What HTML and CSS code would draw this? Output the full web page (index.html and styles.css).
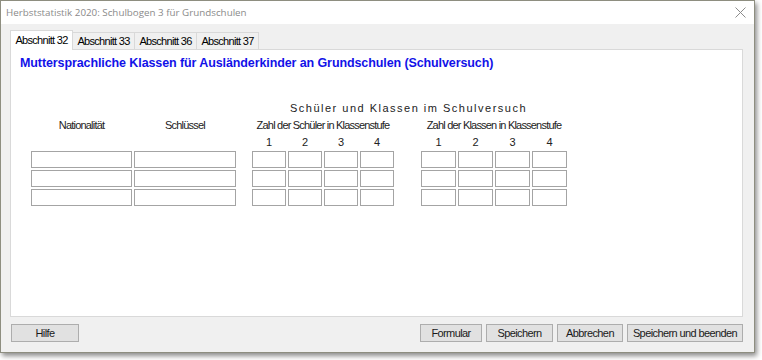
FILE: index.html
```html
<!DOCTYPE html>
<html lang="de">
<head>
  <meta charset="utf-8">
  <title>Herbststatistik 2020</title>
  <link rel="stylesheet" href="styles.css">
</head>
<body>
  <div class="window">
    <div class="titleBar">
      <span class="titleText">Herbststatistik 2020: Schulbogen 3 für Grundschulen</span>
      <svg class="closeIcon" width="11" height="11" viewBox="0 0 11 11">
        <path d="M0.5 0.5 L10.5 10.5 M10.5 0.5 L0.5 10.5" stroke="#8c8c8c" stroke-width="1" fill="none"/>
      </svg>
    </div>

    <div class="windowBody">
      <div class="tabStrip">
        <div class="tab active">Abschnitt 32</div>
        <div class="tab">Abschnitt 33</div>
        <div class="tab">Abschnitt 36</div>
        <div class="tab">Abschnitt 37</div>
      </div>

      <div class="tabPanel">
        <h1 class="sectionTitle">Muttersprachliche Klassen für Ausländerkinder an Grundschulen (Schulversuch)</h1>

        <div class="formGrid">
          <div class="groupTitle">Schüler und Klassen im Schulversuch</div>

          <div class="colLabel nat">Nationalität</div>
          <div class="colLabel key">Schlüssel</div>
          <div class="colLabel pupils">Zahl der Schüler in Klassenstufe</div>
          <div class="colLabel classes">Zahl der Klassen in Klassenstufe</div>

          <div class="stufe s1">1</div>
          <div class="stufe s2">2</div>
          <div class="stufe s3">3</div>
          <div class="stufe s4">4</div>
          <div class="stufe k1">1</div>
          <div class="stufe k2">2</div>
          <div class="stufe k3">3</div>
          <div class="stufe k4">4</div>

          <input class="field row1 nat" type="text">
          <input class="field row1 key" type="text">
          <input class="field row1 s1" type="text">
          <input class="field row1 s2" type="text">
          <input class="field row1 s3" type="text">
          <input class="field row1 s4" type="text">
          <input class="field row1 k1" type="text">
          <input class="field row1 k2" type="text">
          <input class="field row1 k3" type="text">
          <input class="field row1 k4" type="text">

          <input class="field row2 nat" type="text">
          <input class="field row2 key" type="text">
          <input class="field row2 s1" type="text">
          <input class="field row2 s2" type="text">
          <input class="field row2 s3" type="text">
          <input class="field row2 s4" type="text">
          <input class="field row2 k1" type="text">
          <input class="field row2 k2" type="text">
          <input class="field row2 k3" type="text">
          <input class="field row2 k4" type="text">

          <input class="field row3 nat" type="text">
          <input class="field row3 key" type="text">
          <input class="field row3 s1" type="text">
          <input class="field row3 s2" type="text">
          <input class="field row3 s3" type="text">
          <input class="field row3 s4" type="text">
          <input class="field row3 k1" type="text">
          <input class="field row3 k2" type="text">
          <input class="field row3 k3" type="text">
          <input class="field row3 k4" type="text">
        </div>
      </div>

      <div class="buttonBar">
        <button class="winButton help">Hilfe</button>
        <div class="buttonGroup">
          <button class="winButton formular">Formular</button>
          <button class="winButton save">Speichern</button>
          <button class="winButton cancel">Abbrechen</button>
          <button class="winButton saveClose">Speichern und beenden</button>
        </div>
      </div>
    </div>
  </div>
</body>
</html>
```

FILE: styles.css
```css
* {
  margin: 0;
  padding: 0;
  box-sizing: border-box;
}

html,
body {
  width: 100%;
  height: 100%;
  background: #ffffff;
  font-family: "Liberation Sans", Arial, sans-serif;
  font-size: 11px;
  color: #000;
}

.window {
  width: 755px;
  height: 353px;
  border: 1px solid #8e8e80;
  background: #f0f0f0;
  box-shadow: 2px 3px 5px rgba(0, 0, 0, 0.45);
  display: flex;
  flex-direction: column;
}

.titleBar {
  height: 23px;
  background: #ffffff;
  display: flex;
  align-items: center;
  justify-content: space-between;
  padding: 0 8px 0 5px;
}

.titleText {
  font-family: "Open Sans", "Noto Sans", sans-serif;
  font-size: 9.8px;
  color: #8a8a8a;
}

.closeIcon {
  display: block;
}

.windowBody {
  flex: 1;
  display: flex;
  flex-direction: column;
  padding: 5px 11px 0 9px;
}

.tabStrip {
  display: flex;
  align-items: flex-end;
  height: 20px;
}

.tab {
  height: 17px;
  border: 1px solid #d9d9d9;
  border-bottom: none;
  border-left: none;
  background: #f0f0f0;
  letter-spacing: -0.7px;
  line-height: 16px;
  width: 62px;
  text-align: center;
  white-space: nowrap;
}

.tab.active {
  height: 20px;
  background: #ffffff;
  border-left: 1px solid #d9d9d9;
  width: 63px;
  line-height: 18px;
  position: relative;
  top: 1px;
}

.tabPanel {
  height: 268px;
  background: #ffffff;
  border: 1px solid #d9d9d9;
  padding: 5px 0 0 9px;
}

.sectionTitle {
  font-size: 12.5px;
  font-weight: bold;
  color: #1212e8;
  line-height: 16px;
  letter-spacing: -0.1px;
}

.formGrid {
  display: grid;
  margin: 30px 0 0 11px;
  grid-template-columns: 101px 102px 12px repeat(4, 34px) 23px repeat(4, 35px);
  grid-template-rows: 15px 15px 14px 17px 17px 17px;
  column-gap: 2px;
  row-gap: 2px;
}

.groupTitle {
  grid-column: 4 / 13;
  grid-row: 1;
  text-align: center;
  letter-spacing: 1.5px;
  color: #222;
  line-height: 15px;
  padding-right: 2px;
}

.colLabel {
  grid-row: 2;
  text-align: center;
  letter-spacing: -0.8px;
  line-height: 15px;
  white-space: nowrap;
  color: #222;
}

.colLabel.pupils {
  grid-column: 4 / 8;
}

.colLabel.classes {
  grid-column: 9 / 13;
}

.stufe {
  grid-row: 3;
  text-align: center;
  line-height: 14px;
  color: #222;
}

.nat { grid-column: 1; }
.key { grid-column: 2; }
.s1 { grid-column: 4; }
.s2 { grid-column: 5; }
.s3 { grid-column: 6; }
.s4 { grid-column: 7; }
.k1 { grid-column: 9; }
.k2 { grid-column: 10; }
.k3 { grid-column: 11; }
.k4 { grid-column: 12; }

.row1 { grid-row: 4; }
.row2 { grid-row: 5; }
.row3 { grid-row: 6; }

.field {
  height: 17px;
  width: 100%;
  border: 1px solid #a4a4a4;
  background: #ffffff;
  font: inherit;
  outline: none;
}

.buttonBar {
  display: flex;
  justify-content: space-between;
  margin-top: 7px;
  padding-left: 1px;
}

.buttonGroup {
  display: flex;
  gap: 4px;
}

.winButton {
  height: 18px;
  border: 1px solid #adadad;
  background: #e1e1e1;
  font-family: "Liberation Sans", Arial, sans-serif;
  font-size: 11px;
  letter-spacing: -0.6px;
  color: #1a1a1a;
}

.winButton.help { width: 68px; }
.winButton.formular { width: 62px; }
.winButton.save { width: 67px; }
.winButton.cancel { width: 66px; }
.winButton.saveClose { width: 116px; }
```
